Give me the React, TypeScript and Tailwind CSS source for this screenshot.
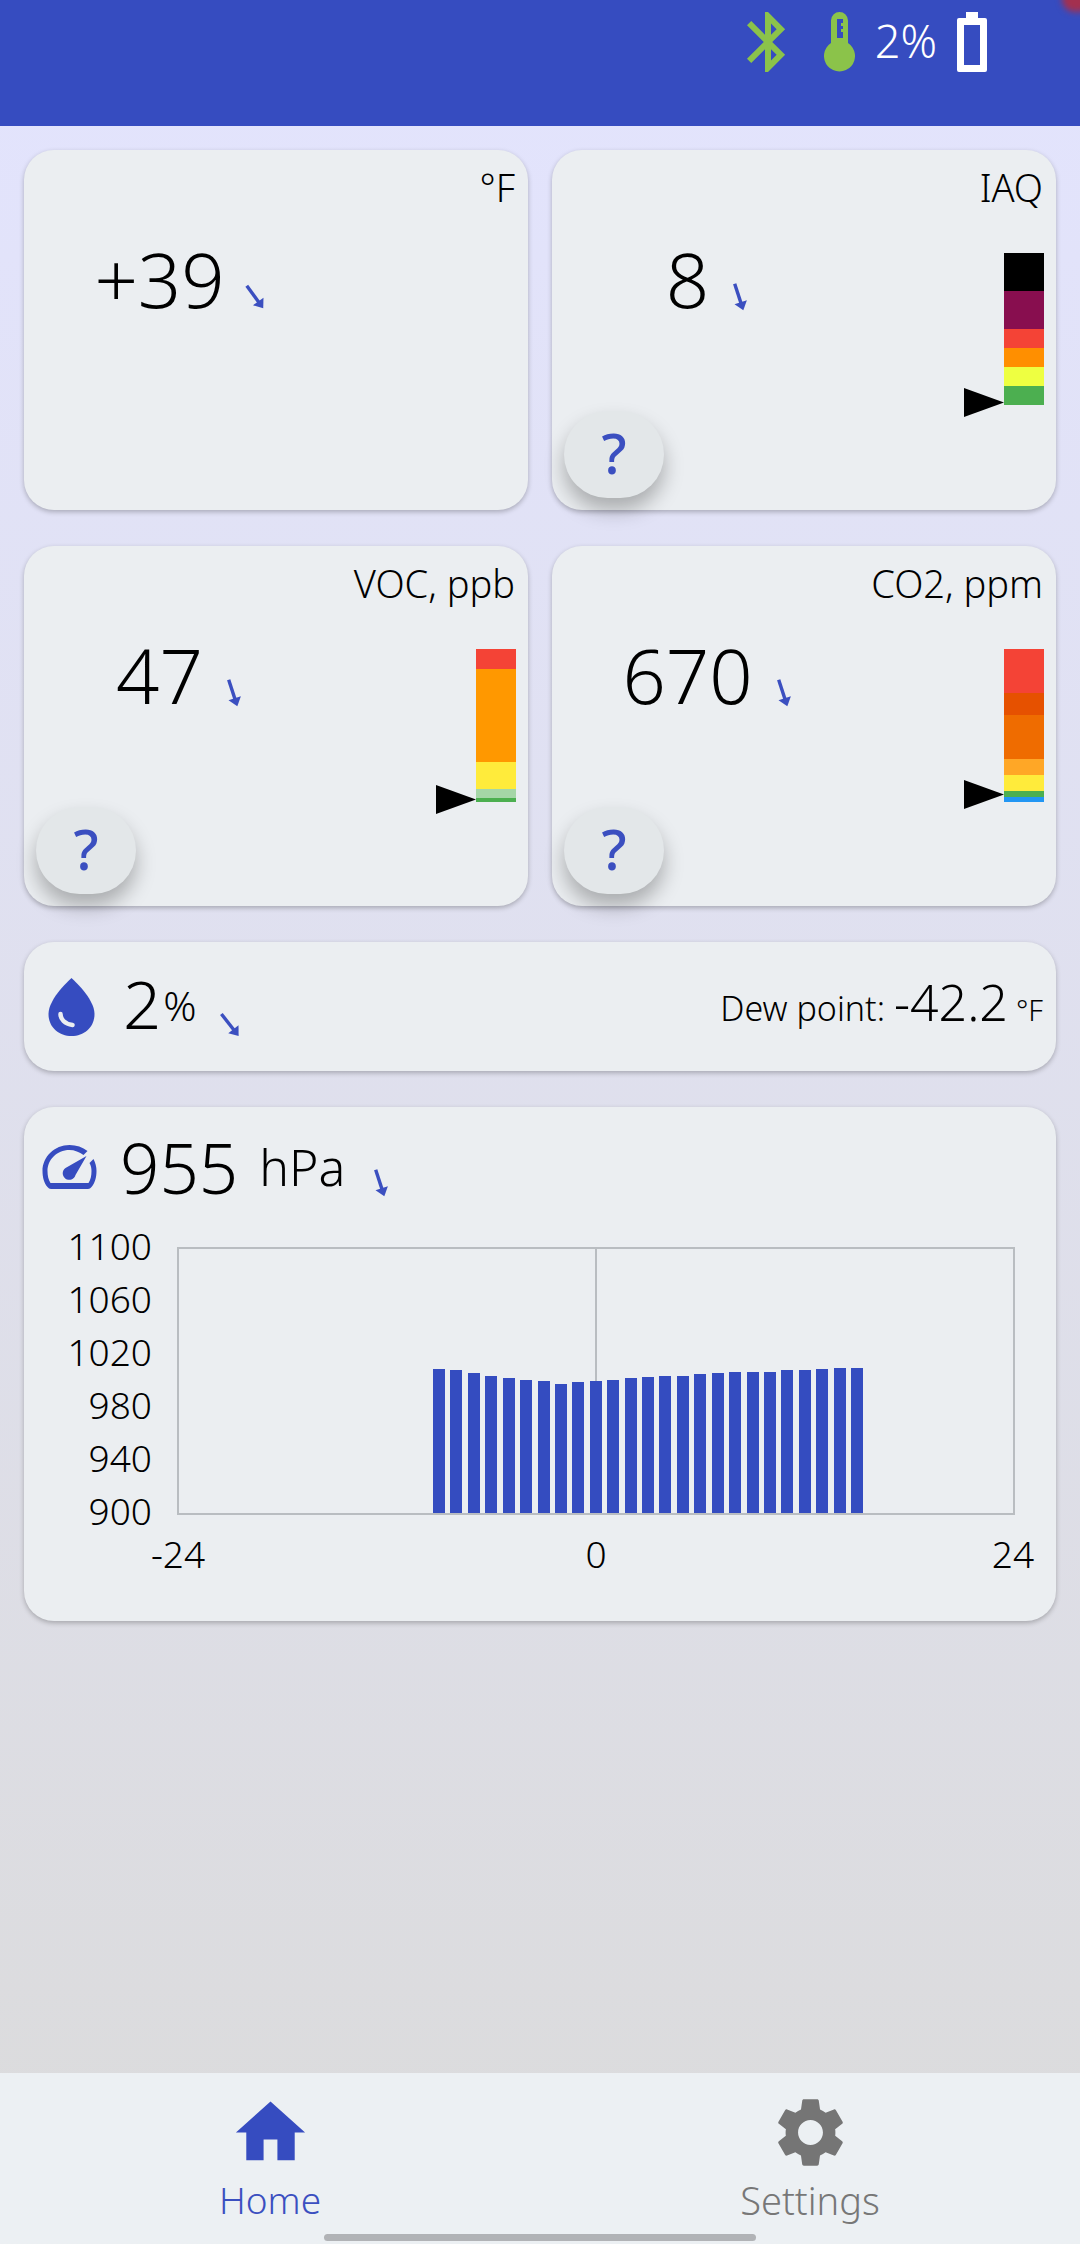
import React from "react";

function Arrow({ angle, className = "" }: { angle: number; className?: string }) {
  return (
    <svg width="30" height="30" viewBox="-15 -15 30 30" className={className} style={{ transform: `rotate(${angle}deg)` }}>
      <line x1="0" y1="-14" x2="0" y2="8" stroke="#3b4fc0" strokeWidth="3.4" />
      <polygon points="-6.5,5.5 6.5,5.5 0,14" fill="#3b4fc0" />
    </svg>
  );
}

function Bar({ segs, marker }: { segs: [string, number][]; marker: number }) {
  return (
    <div className="absolute right-[12px] top-[103px] w-[40px] flex flex-col">
      {segs.map(([c, h], i) => (
        <div key={i} style={{ background: c, height: h }} />
      ))}
      <svg width="40" height="29" viewBox="0 0 40 29" className="absolute left-[-40px]" style={{ top: marker - 14.5 }}>
        <polygon points="0,0 40,14.5 0,29" fill="#000" />
      </svg>
    </div>
  );
}

function Help() {
  return (
    <div className="absolute left-[12px] bottom-[12px] w-[100px] h-[87px] rounded-[44px] bg-[#e3e7e9] shadow-[0_12px_20px_rgba(0,0,0,0.28)] flex items-center justify-center pb-[5px] text-[#3b4fc0] text-[56px] font-medium leading-none">
      ?
    </div>
  );
}

function Card({ label, value, angle, children }: { label: string; value: string; angle: number; children?: React.ReactNode }) {
  return (
    <div className="relative h-[360px] rounded-[30px] bg-[#ebeef1] shadow-[0_2px_5px_rgba(0,0,0,0.25)]">
      <div className="pr-[13px] pt-[12px] text-right text-[38px] leading-[50px] font-[350] text-black">{label}</div>
      <div className="w-[316px] mt-[14px] flex items-end justify-center">
        <span className="text-[76px] leading-[105px] font-[350] text-black">{value}</span>
        <Arrow angle={angle} className="ml-[15px] mb-[19px]" />
      </div>
      {children}
    </div>
  );
}

const heights = [144, 143, 140, 137, 135, 133, 132, 129, 131, 132, 133, 135, 136, 137, 137, 139, 140, 141, 141, 141, 143, 143, 144, 145, 145];

export default function App() {
  return (
    <div className="relative w-[1080px] h-[2244px] flex flex-col overflow-hidden bg-gradient-to-b from-[#e3e4fe] to-[#dbdbdb]" style={{ fontFamily: '"Noto Sans", sans-serif' }}>
      <header className="relative h-[126px] shrink-0 bg-[#364cc0] overflow-hidden">
        <div className="absolute -top-[14px] -right-[12px] w-[30px] h-[26px] rounded-full bg-[#a3304f] blur-[3px]" />
        <div className="flex items-start justify-end pr-[93px] pt-[6px]">
          <svg width="72" height="72" viewBox="0 0 24 24" fill="#8bc34a">
            <path d="M17.71 7.71L12 2h-1v7.59L6.41 5 5 6.41 10.59 12 5 17.59 6.41 19 11 14.41V22h1l5.71-5.71-4.3-4.29 4.3-4.29zM13 5.83l1.88 1.88L13 9.59V5.83zm1.88 10.46L13 18.17v-3.76l1.88 1.88z" />
          </svg>
          <svg width="31" height="60" viewBox="0 0 31 60" className="ml-[20px] mt-[6px]">
            <path d="M7 31V8.500a8.500 8.500 0 0 1 17 0V31a15.500 15.500 0 1 1-17 0z" fill="#8bc34a" />
            <path d="M13 7h6v4h-2v3h2v3h-2v3h2v6h-6z" fill="#364cc0" />
          </svg>
          <span className="ml-[20px] mt-[5px] text-[45px] leading-[60px] font-[350] text-white">2%</span>
          <svg width="30" height="60" viewBox="0 0 30 60" className="ml-[20px] mt-[6px]">
            <path fillRule="evenodd" d="M9 0h12v6h7a2 2 0 0 1 2 2v50a2 2 0 0 1-2 2H2a2 2 0 0 1-2-2V8a2 2 0 0 1 2-2h7zM7 13v40h16V13z" fill="#fff" />
          </svg>
        </div>
      </header>

      <main className="flex-1 px-[24px] pt-[24px]">
        <div className="grid grid-cols-2 gap-x-[24px] gap-y-[36px]">
          <Card label="°F" value="+39" angle={-36} />
          <Card label="IAQ" value="8" angle={-18}>
            <Bar segs={[["#000000", 38], ["#880e4f", 38], ["#f44336", 19], ["#ff8f00", 19], ["#eeff41", 19], ["#4caf50", 19]]} marker={149} />
            <Help />
          </Card>
          <Card label="VOC, ppb" value="47" angle={-18}>
            <Bar segs={[["#f44336", 20], ["#ff9800", 93], ["#ffeb3b", 27], ["#a5d6a7", 9], ["#4caf50", 4]]} marker={150} />
            <Help />
          </Card>
          <Card label="CO2, ppm" value="670" angle={-18}>
            <Bar segs={[["#f44336", 44], ["#e65100", 22], ["#ef6c00", 44], ["#ffa726", 16], ["#ffeb3b", 16], ["#4caf50", 6], ["#2196f3", 5]]} marker={145} />
            <Help />
          </Card>
        </div>

        <div className="mt-[36px] h-[129px] rounded-[30px] bg-[#ebeef1] shadow-[0_2px_5px_rgba(0,0,0,0.25)] flex items-center pl-[24px] pr-[13px]">
          <svg width="47" height="58" viewBox="0 0 46 58">
            <path d="M23 0C23 0 46 20 46 36C46 49 36 58 23 58C10 58 0 49 0 36C0 20 23 0 23 0Z" fill="#364cc0" />
            <path d="M12 36C12 41 16 46 24 47" stroke="#ebeef1" strokeWidth="4.500" strokeLinecap="round" fill="none" />
          </svg>
          <span className="ml-[28px] mb-[8px] text-[67px] leading-[90px] font-[350] text-black">2</span>
          <span className="ml-[2px] mb-[4px] text-[41px] leading-[50px] font-[350] text-black">%</span>
          <Arrow angle={-38} className="ml-[18px] mt-[36px]" />
          <div className="ml-auto mb-[9px] flex items-baseline text-black">
            <span className="text-[34px] font-[350]">Dew point:</span>
            <span className="ml-[9px] text-[50px] font-[350]">-42.2</span>
            <span className="ml-[8px] text-[29px] font-[350]">°F</span>
          </div>
        </div>

        <div className="mt-[36px] h-[514px] rounded-[30px] bg-[#ebeef1] shadow-[0_2px_5px_rgba(0,0,0,0.25)]">
          <div className="flex items-center h-[120px] pl-[18px]">
            <svg width="55" height="44" viewBox="0 0 54 44">
              <path fillRule="evenodd" d="M27 0C34 0 40 2 45 6L41 10C37 7 32 5 27 5C14 5 5 15 5 26C5 31 6 35 8 38H46C48 35 49 31 49 26C49 23 48.500 21 47 18L51 14C53 18 54 22 54 26C54 32 52.500 38 49 42C48 43 47 44 45.500 44H8.500C7 44 6 43 5 42C1.500 38 0 32 0 26C0 12 12 0 27 0Z" fill="#364cc0" />
              <path d="M44 11L33 30A6.500 6.500 0 1 1 23 23Z" fill="#364cc0" />
            </svg>
            <span className="ml-[23px] text-[69px] leading-[90px] font-[350] text-black">955</span>
            <span className="ml-[21px] text-[50px] leading-[70px] font-[350] text-black">hPa</span>
            <Arrow angle={-18} className="ml-[20px] mt-[32px]" />
          </div>

          <div className="relative mt-[20px] ml-[153px] w-[838px] h-[268px] border-2 border-[#b9bdc1]">
            <div className="absolute left-[416px] top-0 bottom-0 w-[2px] bg-[#b9bdc1]" />
            <div className="absolute left-[254px] bottom-0 flex items-end gap-[5.43px]">
              {heights.map((h, i) => (
                <div key={i} className="w-[12px] bg-[#344cc0]" style={{ height: h }} />
              ))}
            </div>
            {["1100", "1060", "1020", "980", "940", "900"].map((t, i) => (
              <div key={t} className="absolute right-[calc(100%+27px)] text-[37px] leading-[50px] font-[350] text-black" style={{ top: -28 + i * 53 }}>
                {t}
              </div>
            ))}
            {[["-24", -1], ["0", 417], ["24", 834]].map(([t, x]) => (
              <div key={t} className="absolute -translate-x-1/2 top-[280px] text-[37px] leading-[50px] font-[350] text-black" style={{ left: x as number }}>
                {t}
              </div>
            ))}
          </div>
        </div>
      </main>

      <nav className="relative h-[171px] shrink-0 bg-[#ecf0f3] flex">
        <div className="flex-1 flex flex-col items-center pt-[18px]">
          <svg width="83" height="83" viewBox="0 0 24 24" fill="#364cc0">
            <path d="M10 20v-6h4v6h5v-8h3L12 3 2 12h3v8z" />
          </svg>
          <span className="text-[37px] leading-[52px] font-[350] text-[#3b4fc0]">Home</span>
        </div>
        <div className="flex-1 flex flex-col items-center pt-[18px]">
          <svg width="83" height="83" viewBox="0 0 24 24" fill="#757575">
            <path d="M19.14 12.94c.04-.3.06-.61.06-.94 0-.32-.02-.64-.07-.94l2.03-1.58c.18-.14.23-.41.12-.61l-1.92-3.32c-.12-.22-.37-.29-.59-.22l-2.39.96c-.5-.38-1.03-.7-1.62-.94l-.36-2.54c-.04-.24-.24-.41-.48-.41h-3.84c-.24 0-.43.17-.47.41l-.36 2.54c-.59.24-1.13.57-1.62.94l-2.39-.96c-.22-.08-.47 0-.59.22L2.74 8.87c-.12.21-.08.47.12.61l2.03 1.58c-.05.3-.09.63-.09.94s.02.64.07.94l-2.03 1.58c-.18.14-.23.41-.12.61l1.92 3.32c.12.22.37.29.59.22l2.39-.96c.5.38 1.03.7 1.62.94l.36 2.54c.05.24.24.41.48.41h3.84c.24 0 .44-.17.47-.41l.36-2.54c.59-.24 1.13-.56 1.62-.94l2.39.96c.22.08.47 0 .59-.22l1.92-3.32c.12-.22.07-.47-.12-.61l-2.01-1.58zM12 15.6c-1.98 0-3.6-1.62-3.6-3.6s1.62-3.6 3.6-3.6 3.6 1.62 3.6 3.6-1.62 3.6-3.6 3.6z" />
          </svg>
          <span className="text-[38px] leading-[52px] font-[350] text-[#777777]">Settings</span>
        </div>
        <div className="absolute left-[324px] bottom-[3px] w-[432px] h-[7px] rounded-full bg-[#b1b3b6]" />
      </nav>
    </div>
  );
}
